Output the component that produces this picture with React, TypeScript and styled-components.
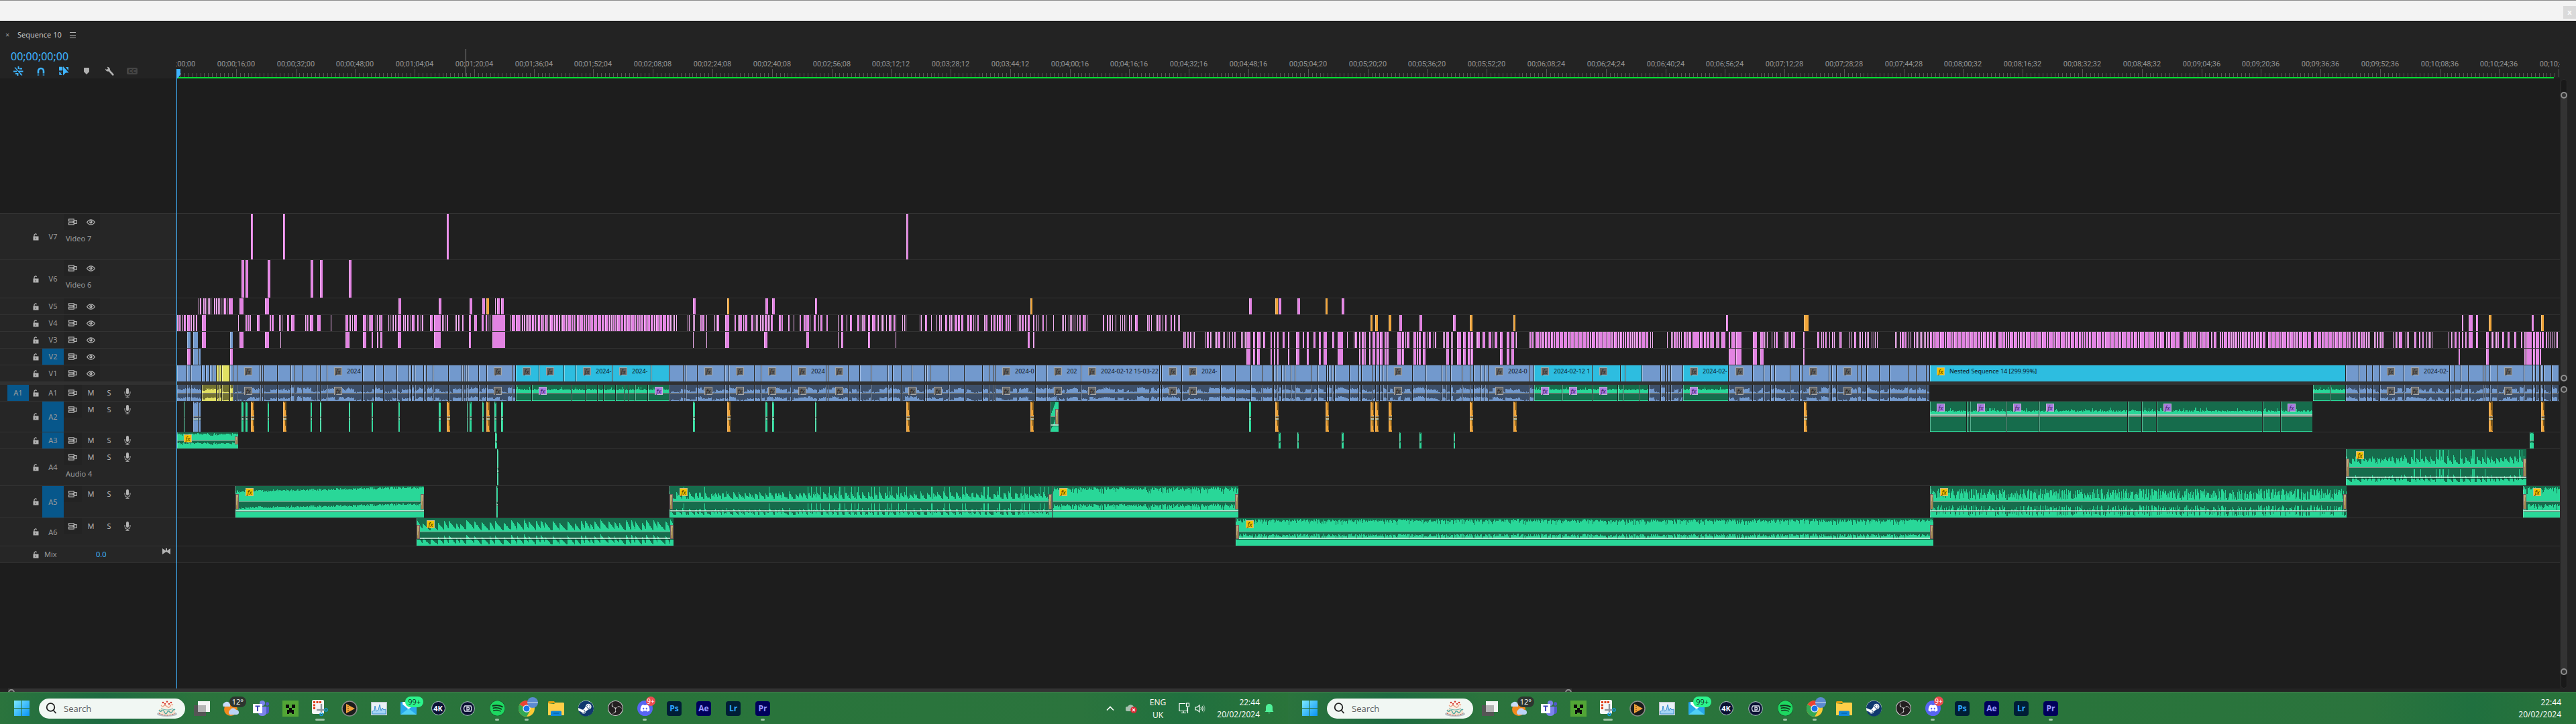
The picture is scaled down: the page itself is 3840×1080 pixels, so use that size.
import React from "react";
import styled, { createGlobalStyle, css } from "styled-components";
import { FaSpotify, FaSteam, FaDiscord } from "react-icons/fa";
import { SiObsstudio } from "react-icons/si";

const GlobalStyle = createGlobalStyle`
  * { box-sizing: border-box; }
  html, body { margin: 0; background: #1d1d1d; }
  body { font-family: "Noto Sans", "Open Sans", sans-serif; font-size: 11px; line-height: 16px; color: #9b9b9b; overflow: hidden; }
  button { font: inherit; color: inherit; background: none; border: 0; padding: 0; margin: 0; cursor: pointer; }
  input { font: inherit; color: inherit; background: none; border: 0; padding: 0; margin: 0; outline: none; }
  svg { display: block; }
`;

/* ---------- timeline data ---------- */

const HEADER_WIDTH = 263;

type Tone = "pink" | "orange" | "blue" | "cyan" | "yellow" | "green";
type Span = { from: number; width: number; tone: Tone };

const tones: Record<Tone, { fill: string; edge: string; dark: string }> = {
  pink: { fill: "#e283e2", edge: "#f1b0f0", dark: "#6d3f6d" },
  orange: { fill: "#efa439", edge: "#f6c888", dark: "#7b561c" },
  blue: { fill: "#7299cd", edge: "#a3bde0", dark: "#3d4f69" },
  cyan: { fill: "#2dbde0", edge: "#7fd8ec", dark: "#17606f" },
  yellow: { fill: "#e1e163", edge: "#eeeeaa", dark: "#727131" },
  green: { fill: "#29d798", edge: "#86e8c4", dark: "#166c4c" },
};

/** Deterministic random source, so that every render draws the same clips. */
function random(seed: number) {
  let s = (seed * 7919 + 13) % 2147483647;
  return () => {
    s = (s * 16807) % 2147483647;
    return s / 2147483647;
  };
}

/** "264,1 266,2" gives two clips, at 264 and 266, one and two pixels wide. */
function spans(tone: Tone, list: string): Span[] {
  return list
    .trim()
    .split(/\s+/)
    .map((item) => {
      const [from, width] = item.split(",").map(Number);
      return { from, width: width || 1, tone };
    });
}

/** A run of clips that are packed one pixel apart. */
function packed(from: number, to: number, min: number, max: number, tone: Tone = "pink"): Span[] {
  const next = random(from);
  const out: Span[] = [];
  let x = from;
  while (x < to) {
    const width = Math.min(min + Math.floor(next() * (max - min + 1)), to - x);
    out.push({ from: x, width, tone });
    x += width + 1;
  }
  return out;
}

const video7 = spans("pink", "374,3 422,3 666,3 1351,3");
const video6 = spans("pink", "360,4 366,4 399,4 463,4 477,4 520,4");
const video5 = [
  ...spans("pink", "296,1 298,2 303,2 306,1 308,1 310,1 312,1 314,1 319,2 322,2 325,1 327,1 329,1 332,1 334,3 338,1 341,6 357,6 395,6 594,4 654,4 700,4 719,4 738,1 741,4 747,4 1033,4 1141,4 1151,4 1215,3 1862,4 1906,4 1934,4 2000,4"),
  ...spans("orange", "725,4 1084,3 1536,3 1901,4 1976,3"),
];
const video4 = [
  ...spans("pink", "264,1 266,2 269,1 272,1 274,3 279,5 285,1 288,1 290,1 292,2 301,6 355,1 366,2 369,3 373,1 383,4 402,2 405,3 416,1 418,1 420,1 428,3 434,5 455,1 457,2 460,1 462,5 473,5 493,1 515,4 520,1 522,1 525,1 528,4 541,5 548,1 550,1 552,4 560,1 562,1 565,1 567,3 579,1 581,1 584,1 586,1 589,2 593,5 601,2 604,1 607,2 612,1 614,4 622,2 627,1 629,2 641,4 647,10 659,1 661,1 663,1 666,2 678,1 680,1 683,2 689,2 699,3 707,4 718,3 724,2 727,1 730,1 734,19 760,1 763,5 769,6"),
  ...packed(776, 998, 1, 5),
  ...spans("pink", "999,1 1001,1 1003,1 1005,1 1008,1 1025,1 1027,1 1033,1 1035,1 1044,2 1047,3 1053,1 1065,1 1067,1 1069,3 1081,6 1095,2 1100,1 1102,4 1108,1 1110,4 1120,3 1125,1 1127,1 1129,1 1133,2 1136,1 1138,1 1140,4 1145,1 1147,1 1149,3 1161,3 1165,2 1175,2 1183,1 1192,2 1198,3 1202,4 1207,1 1213,3 1220,1 1223,3 1232,2 1249,1 1254,3 1262,1 1267,3 1278,3 1283,1 1285,1 1287,3 1294,3 1300,5 1307,1 1309,1 1313,1 1315,1 1317,1 1321,1 1325,3 1329,1 1332,2 1335,1 1345,1 1348,1 1350,1 1371,1 1373,1 1379,3 1388,1 1396,1 1400,2 1403,1 1409,3 1415,2 1418,1 1420,1 1423,4 1428,3 1433,3 1442,3 1446,3 1451,1 1453,1 1457,2 1467,1 1469,3 1477,2 1481,2 1484,1 1486,2 1489,3 1493,2 1499,2 1502,2 1505,2 1517,1 1519,1 1521,1 1523,3 1528,2 1532,3 1540,2 1545,1 1547,1 1554,2 1559,1 1570,1 1583,1 1585,1 1588,1 1593,1 1595,1 1597,1 1599,1 1602,1 1606,1 1609,2 1614,3 1618,1 1620,1 1644,2 1650,2 1653,1 1655,1 1658,1 1663,1 1670,1 1673,1 1676,1 1678,1 1683,2 1686,1 1692,4 1710,1 1712,2 1716,1 1723,1 1725,1 1727,3 1733,1 1737,2 1745,2 1750,2 1756,1 1758,1 2086,4 2116,4 2166,4 2573,3 3670,2 3680,6 3691,3 3774,3"),
  ...spans("orange", "2043,3 2050,4 2070,4 2191,4 2256,3 2689,7 3710,4 3788,4"),
];
const video3 = [
  ...spans("blue", "279,5 288,7 343,4"),
  ...spans("pink", "301,6 357,6 395,6 418,1 515,5 520,1 541,5 554,2 562,2 567,3 593,5 647,10 699,3 734,19 1033,1 1053,1 1081,6 1139,5 1202,4 1249,1 1254,3 1294,3 1335,1 1532,3 1540,2 1764,2 1767,1 1770,2 1774,2 1778,1 1780,1 1796,1 1799,3 1804,1 1806,1 1811,1 1813,1 1815,4 1823,1 1825,1 1830,1 1832,1 1837,1 1840,2 1850,1 1852,1 1854,1 1856,1 1858,6 1868,3 1874,4 1879,1 1883,3 1894,2 1899,2 1904,2 1912,3 1920,2 1932,5 1942,2 1948,3 1958,3 1966,3 1973,5 1986,3 1994,8 2008,1 2018,1 2020,3 2026,2 2030,3 2034,2 2041,2 2046,4 2052,4 2057,4 2064,3 2068,2 2083,6 2090,3 2095,1 2097,4 2107,4 2112,2 2115,3 2121,4 2128,1 2130,3 2137,1 2139,2 2151,1 2153,1 2156,4 2163,1 2165,1 2172,6 2181,4 2188,4 2193,3 2200,1 2202,4 2210,4 2219,4 2225,1 2228,4 2236,4 2246,4 2253,4 2258,1 2260,1 2280,2 2283,2 2285,1"),
  ...packed(2289, 2457, 2, 5),
  ...spans("pink", "2460,1 2463,1 2485,1 2491,1 2493,1 2495,3 2499,3 2503,1 2506,1"),
  ...packed(2510, 2522, 2, 4),
  ...spans("pink", "2523,10 2534,4 2540,3 2544,4 2549,1 2551,4 2558,1 2560,3 2566,6 2577,2 2581,6 2588,8 2613,6 2624,5 2630,1 2632,1 2634,1 2641,1 2645,1 2647,3 2659,1 2661,1 2663,3 2670,1 2672,4 2688,2 2709,3 2715,1 2717,2 2721,2 2727,1 2731,2 2734,1 2742,2 2745,1 2757,1 2759,1 2764,3 2771,1 2773,1 2776,1 2780,2 2783,1 2785,1 2790,1 2793,1 2795,1 2798,1 2825,1 2827,1 2832,2 2835,3 2839,3 2845,1 2848,1 2853,2 2856,1 2858,1 2860,1 2862,1 2864,1 2866,1 2868,1 2870,1 2873,2"),
  ...packed(2877, 2976, 2, 6),
  ...packed(2979, 3226, 2, 7),
  ...packed(3229, 3250, 2, 7),
  ...packed(3255, 3276, 2, 6),
  ...packed(3279, 3293, 2, 6),
  ...spans("pink", "3296,2 3300,4"),
  ...packed(3309, 3378, 2, 5),
  ...packed(3381, 3445, 2, 6),
  ...packed(3449, 3504, 3, 5),
  ...packed(3507, 3534, 1, 3),
  ...packed(3539, 3555, 1, 2),
  ...spans("pink", "3567,1 3571,2 3574,1 3576,5 3586,1 3588,1 3590,1 3599,3 3606,2 3611,2 3617,1 3619,1 3621,1 3623,1 3625,1 3650,1 3654,1 3656,1 3659,3 3665,2 3670,2 3675,2 3680,6 3691,3 3706,4 3713,1 3715,2 3719,1 3721,1 3723,2 3730,3 3738,3 3748,3 3758,2 3763,2 3766,8 3776,3 3780,5 3786,2 3789,3 3795,2 3798,1 3801,1 3805,1 3808,1 3810,1 3812,1"),
];
const video2 = [
  ...spans("blue", "288,7 296,3"),
  ...spans("pink", "279,5 343,4 1858,6 1868,3 1874,4 1894,2 1899,2 1904,2 1920,2 1932,5 1948,3 1966,3 1973,5 1994,8 2026,2 2030,3 2034,2 2041,2 2046,4 2052,4 2057,4 2064,3 2068,2 2083,6 2090,3 2107,4 2112,2 2115,3 2121,4 2156,4 2163,1 2165,1 2172,6 2181,4 2188,4 2193,3 2236,4 2246,4 2253,4 2577,10 2588,8 2613,6 2624,5 2688,2 3665,2 3706,4 3763,2 3766,8 3776,3 3780,5 3786,2"),
];

/** Clips that touch: each number is a cut, the last one is the end of the run. */
function cuts(tone: Tone, list: string): Span[] {
  const at = list.trim().split(/\s+/).map(Number);
  return at.slice(0, -1).map((from, i) => ({ from, width: at[i + 1] - from - 1, tone }));
}

const blueCutsA = "348 354 388 390 393 414 434 439 451 473 478 488 541 559 572 592 610 614 619 632 636 646 669 689 691 695 698 714 726 764 769";
const blueCutsB = "998 1019 1023 1040 1081 1087 1125 1135 1180 1232 1235 1265 1282 1299 1324 1331 1344 1360 1379 1382 1387 1415 1438 1465 1475 1481 1484 1544 1561 1612 1729 1732 1762 1820 1842 1865 1882 1897 1899 1904 1911 1916 1925 1931 1955 1965 1978 1981 1986 1990 2012 2026 2030 2046 2051 2057 2062 2068 2106 2126 2150 2156 2163 2180 2192 2197 2208 2214 2219 2280 2287";
const blueSoundCutsB = blueCutsB.replace(" 1360", "").replace(" 1387", "");
const blueCutsC = "2577 2613 2630 2640 2646 2669 2683 2687 2727 2731 2738 2769 2775 2783 2802 2817 2845 2857 2872 2877";
const blueCutsD = "3497 3517 3528 3537 3548 3584 3652 3659 3669 3680 3702 3705 3712 3723 3763 3776 3780 3786 3788 3792 3804 3815";

const video1 = [
  ...cuts("blue", "264 279 285 301 307 313 318 323"),
  ...cuts("yellow", "323 327 331 343"),
  ...cuts("blue", "343 348"),
  ...cuts("blue", blueCutsA),
  ...cuts("cyan", "769 804 841 859 913 971 998"),
  ...cuts("blue", blueCutsB),
  ...cuts("cyan", "2287 2374 2416 2423 2448"),
  ...cuts("blue", "2448 2476 2483 2486 2491 2509"),
  ...cuts("cyan", "2509 2577"),
  ...cuts("blue", blueCutsC),
  ...cuts("cyan", "2877 3497"),
  ...cuts("blue", blueCutsD),
];

const videoTitles: Record<number, string> = {
  354: "", 488: "2024", 726: "", 769: "", 804: "", 859: "2024-", 913: "2024-",
  1040: "", 1087: "", 1135: "", 1180: "2024", 1235: "", 1484: "2024-0", 1561: "202",
  1612: "2024-02-12 15-03-22", 1732: "", 1762: "2024-", 2068: "", 2219: "2024-0",
  2287: "2024-02-12 1", 2374: "", 2509: "2024-02-", 2577: "", 2687: "", 2738: "",
  2877: "Nested Sequence 14 [299.99%]", 3548: "", 3584: "2024-02-", 3723: "",
};

type Profile = "speech" | "low" | "loud" | "rising" | "beats" | "spikes" | "dense" | "solid" | "decay" | "attack";
type Sound = Span & { profile: Profile; fx?: "grey" | "violet" | "gold"; fadeIn?: boolean; fadeOut?: boolean };

const sound = (list: Span[], profile: Profile, fx?: Record<number, boolean>, kind: Sound["fx"] = "grey"): Sound[] =>
  list.map((s) => ({ ...s, profile, fx: fx && fx[s.from] ? kind : undefined }));
const marks = (...at: number[]) => Object.fromEntries(at.map((n) => [n, true]));

const greyMarks = marks(354, 488, 726, 1040, 1087, 1135, 1180, 1235, 1344, 1382, 1484, 1561, 1612, 1732, 1762, 2068, 2219, 2577, 2687, 2738, 3548, 3584, 3723);

const audio1: Sound[] = [
  ...sound(cuts("blue", "264 279 285 301"), "speech"),
  ...sound(cuts("yellow", "301 323 327 331 343 348"), "speech"),
  ...sound(cuts("blue", blueCutsA), "speech", greyMarks),
  ...sound(cuts("green", "769 793 852 873 891 900 918 931 937 947 966 998"), "low", marks(793, 966), "violet"),
  ...sound(cuts("blue", blueSoundCutsB), "speech", greyMarks),
  ...sound(cuts("green", "2287 2329 2374 2412 2420 2444 2458"), "low", marks(2287, 2329, 2374), "violet"),
  ...sound(cuts("blue", "2458 2476 2483 2486 2491 2509"), "speech"),
  ...sound(cuts("green", "2509 2577"), "low", marks(2509), "violet"),
  ...sound(cuts("blue", blueCutsC), "speech", greyMarks),
  ...sound(cuts("green", "3448 3474 3497"), "low"),
  ...sound(cuts("blue", blueCutsD), "speech", greyMarks),
];
const audio2: Sound[] = [
  ...sound(spans("green", "274,1 360,3 366,3 399,2 463,2 477,2 520,2 554,2 594,2 654,3 696,1 700,3 719,2 737,3 747,3 1033,3 1141,3 1151,3 1215,2 1862,3"), "solid"),
  ...sound(spans("blue", "288,7 296,3"), "solid"),
  ...sound(spans("orange", "374,5 422,5 666,5 725,5 1084,5 1351,5 1536,5 1901,5 1976,5 2043,5 2050,5 2070,5 2191,5 2256,5 2689,5 3710,6 3788,5"), "decay"),
  { from: 1566, width: 12, tone: "green", profile: "attack", fadeOut: true },
  ...sound(cuts("green", "2877 2932 2937 2991 3040 3172 3193 3215 3373 3400 3448"), "low", marks(2877, 2937, 2991, 3040, 3215, 3400), "violet"),
];
const audio3: Sound[] = [
  { from: 264, width: 91, tone: "green", profile: "loud", fx: "gold", fadeOut: true },
  ...sound(spans("green", "738,3 1906,3 1934,2 2000,3 2086,2 2116,3 2167,2 3771,6"), "solid"),
];
const audio4: Sound[] = [
  ...sound(spans("green", "741,2"), "solid"),
  { from: 3497, width: 269, tone: "green", profile: "spikes", fx: "gold", fadeIn: true, fadeOut: true },
];
const audio5: Sound[] = [
  { from: 351, width: 281, tone: "green", profile: "rising", fx: "gold", fadeIn: true, fadeOut: true },
  ...sound(spans("green", "740,2"), "solid"),
  { from: 998, width: 570, tone: "green", profile: "spikes", fx: "gold", fadeIn: true, fadeOut: true },
  { from: 1569, width: 277, tone: "green", profile: "loud", fx: "gold", fadeOut: true },
  { from: 2877, width: 621, tone: "green", profile: "dense", fx: "gold", fadeIn: true, fadeOut: true },
  { from: 3761, width: 56, tone: "green", profile: "loud", fx: "gold", fadeIn: true },
];
const audio6: Sound[] = [
  { from: 621, width: 383, tone: "green", profile: "beats", fx: "gold", fadeIn: true, fadeOut: true },
  { from: 1842, width: 1040, tone: "green", profile: "loud", fx: "gold", fadeIn: true, fadeOut: true },
];

/* ---------- wave forms ---------- */

function levels(profile: Profile, width: number, seed: number): number[] {
  const next = random(seed);
  const out: number[] = [];
  let level = 0.5;
  let hold = 0;
  let slope = 0;
  for (let x = 0; x < width; x++) {
    const r = next();
    const t = x / width;
    if (profile === "solid") out.push(0.9 + r * 0.1);
    else if (profile === "decay") out.push([1, 1, 0.95, 0.45, 0.1, 0.05][x] ?? 0.05);
    else if (profile === "attack") out.push(Math.min(1, 0.1 + x * 0.13));
    else if (profile === "speech") {
      if (hold-- <= 0) {
        hold = 2 + Math.floor(r * 7);
        level = next() < 0.3 ? 0.12 : 0.35 + next() * 0.35;
      }
      out.push(Math.min(0.95, level + (r - 0.5) * 0.22));
    } else if (profile === "low") out.push(0.28 + r * 0.2 + (next() < 0.07 ? 0.3 : 0));
    else if (profile === "loud") out.push(next() < 0.14 ? 0.5 + r * 0.25 : 0.76 + r * 0.22);
    else if (profile === "rising") out.push(Math.min(1, 0.6 + t * 0.28 + r * 0.16));
    else if (profile === "beats") {
      if (hold-- <= 0) {
        hold = 5 + Math.floor(r * 8);
        level = 0.6 + next() * 0.35;
        slope = level / (hold + 2);
      }
      out.push(Math.max(0.1, level));
      level -= slope * (0.6 + r * 0.8);
    } else if (profile === "spikes") {
      if (hold-- <= 0) {
        hold = 4 + Math.floor(r * 6);
        level = 0.65;
      }
      level -= 0.06;
      out.push(next() < (t > 0.35 ? 0.1 : 0.02) ? 1 : Math.max(0.2, level + (r - 0.5) * 0.2));
    } else out.push(next() < 0.3 ? 0.1 + r * 0.2 : 0.4 + r * 0.48);
  }
  return out;
}

function channel(values: number[], base: number, height: number): string {
  let d = `M0 ${base}`;
  values.forEach((v, i) => {
    d += `V${base - Math.round(v * height)}H${i + 1}`;
  });
  return `${d}V${base}Z`;
}

function Wave({ item, height }: { item: Sound; height: number }) {
  const mid = Math.floor(height / 2);
  const values = levels(item.profile, item.width, item.from);
  const tone = tones[item.tone];
  const tall = height > 40;
  const single = item.profile === "low";
  const volume = single ? mid - 3 : Math.round(height * (height < 45 ? 0.7 : 0.76)) - (item.profile === "solid" || item.profile === "decay" ? 9 : 0);
  const base = single && tall ? volume : mid;
  return (
    <svg width={item.width} height={height} shapeRendering="crispEdges" aria-hidden="true">
      <path d={channel(values, base, single ? 13 : base - 1)} fill={tone.fill} />
      {single ? (
        <rect y={height - 1} width={item.width} height="1" fill={tone.fill} />
      ) : (
        <path d={channel(values, height, height - mid - 3)} fill={tone.fill} />
      )}
      {single && tall && <rect y={mid - 1} width={item.width} height="1" fill={tone.fill} />}
      <rect y={mid} width={item.width} height="1" fill="#88877f" />
      {tall && <rect y={volume} width={item.width} height="2" fill="#d8efe2" opacity="0.75" />}
      {tall && <rect y={volume + 2} width={item.width} height="1" fill="#123c2c" opacity="0.8" />}
    </svg>
  );
}

/* ---------- clips ---------- */

const Lane = styled.div`
  position: relative;
  min-width: 0;
  overflow: hidden;
  background: #202020;
`;

const ClipBox = styled.div<{ $tone: Tone; $sound?: boolean }>`
  position: absolute;
  top: 0;
  bottom: 0;
  overflow: hidden;
  background: ${(p) => (p.$sound ? tones[p.$tone].dark : tones[p.$tone].fill)};
  &::before {
    content: "";
    position: absolute;
    inset: 0 auto 0 0;
    width: 1px;
    background: ${(p) => tones[p.$tone].edge};
    opacity: ${(p) => (p.$sound ? 0.6 : 1)};
  }
`;

const ClipInfo = styled.div<{ $inset?: boolean }>`
  position: absolute;
  top: 3px;
  left: ${(p) => (p.$inset ? 15 : 10)}px;
  display: flex;
  align-items: center;
  gap: 7px;
  height: 12px;
`;

const fxColors = {
  grey: css`background: #646464; border-color: #a6a6a6; color: #262626;`,
  violet: css`background: #a97be0; border-color: #c3b4d4; color: #3a2360;`,
  gold: css`background: #f4c300; border-color: #c9bb8a; color: #4d3d00;`,
};

const FxBadge = styled.span<{ $kind: keyof typeof fxColors }>`
  display: flex;
  align-items: center;
  justify-content: center;
  width: 12px;
  height: 12px;
  border: 1px solid;
  font-size: 9px;
  line-height: 9px;
  font-style: italic;
  ${(p) => fxColors[p.$kind]}
`;

const ClipTitle = styled.span`
  font-size: 9px;
  line-height: 12px;
  color: #0b131c;
  white-space: nowrap;
`;

const Fade = styled.span<{ $end?: boolean }>`
  position: absolute;
  top: 25%;
  height: 50%;
  width: 5px;
  ${(p) => (p.$end ? "right: 0;" : "left: 0;")}
  background: linear-gradient(100deg, #c0aa78 45%, #a2894f 50%);
  border: 1px solid #6f5d62;
`;

function VideoClips({ items, titles = {} }: { items: Span[]; titles?: Record<number, string> }) {
  return (
    <>
      {items.map((s) => (
        <ClipBox key={`${s.tone}${s.from}`} $tone={s.tone} style={{ left: s.from - HEADER_WIDTH, width: s.width }}>
          {titles[s.from] !== undefined && (
            <ClipInfo>
              <FxBadge $kind={s.width > 300 ? "gold" : "grey"}>fx</FxBadge>
              {titles[s.from] && <ClipTitle>{titles[s.from]}</ClipTitle>}
            </ClipInfo>
          )}
        </ClipBox>
      ))}
    </>
  );
}

function SoundClips({ items, height }: { items: Sound[]; height: number }) {
  return (
    <>
      {items.map((s) => (
        <ClipBox key={`${s.tone}${s.from}`} $tone={s.tone} $sound style={{ left: s.from - HEADER_WIDTH, width: s.width }}>
          <Wave item={s} height={height} />
          {s.fadeIn && <Fade />}
          {s.fadeOut && <Fade $end />}
          {s.fx && (
            <ClipInfo $inset={s.fadeIn}>
              <FxBadge $kind={s.fx}>fx</FxBadge>
            </ClipInfo>
          )}
        </ClipBox>
      ))}
    </>
  );
}

/* ---------- icons ---------- */

const LockIcon = () => (
  <svg width="9" height="11" viewBox="0 0 9 11" aria-hidden="true">
    <path d="M2 5V3a2 2 0 0 1 3.6-1.2" fill="none" stroke="#b4b4b4" strokeWidth="1.2" />
    <rect x="0.5" y="4.5" width="8" height="6" fill="#b4b4b4" />
    <rect x="4" y="6.5" width="1" height="2.5" fill="#2a2a2a" />
  </svg>
);
const SyncIcon = () => (
  <svg width="13" height="10" viewBox="0 0 13 10" fill="none" stroke="#b4b4b4" strokeWidth="1.2" aria-hidden="true">
    <path d="M0.6 0.8h7.6v3H0.6zM0.6 6.2h7.6v3H0.6zM8.5 2.6h3.6v4.8H8.5M6.5 5h3" />
  </svg>
);
const EyeIcon = () => (
  <svg width="13" height="9" viewBox="0 0 13 9" aria-hidden="true">
    <path d="M0.6 4.5Q3.2 0.8 6.5 0.8T12.4 4.5Q9.8 8.2 6.5 8.2T0.6 4.5Z" fill="none" stroke="#b4b4b4" strokeWidth="1.2" />
    <circle cx="6.5" cy="4.3" r="2.2" fill="#b4b4b4" />
    <circle cx="6" cy="3.8" r="0.8" fill="#2a2a2a" />
  </svg>
);
const MicIcon = () => (
  <svg width="10" height="14" viewBox="0 0 10 14" aria-hidden="true">
    <rect x="3" y="0" width="4" height="9" rx="2" fill="#b4b4b4" />
    <path d="M1 5v2.5a4 4 0 0 0 8 0V5M5 11.5V13M2.5 13.3h5" fill="none" stroke="#b4b4b4" strokeWidth="1" />
  </svg>
);
const NestIcon = () => (
  <svg width="15" height="15" viewBox="0 0 15 15" stroke="#3fb4ff" aria-hidden="true">
    <path d="M2 1.5l11 12" strokeWidth="1.2" />
    <path d="M7.5 0v4M9 3.5h4M0 7.5h5M3 11h4M8 7.5h6.5M6.5 10v4M10 11.5h2" strokeWidth="1.8" />
  </svg>
);
const MagnetIcon = () => (
  <svg width="12" height="13" viewBox="0 0 12 13" fill="none" aria-hidden="true">
    <path d="M2 9V6a4 4 0 0 1 8 0v3" stroke="#3fb4ff" strokeWidth="2.6" />
    <path d="M2 9v4M10 9v4" stroke="#2a6a91" strokeWidth="2.6" />
  </svg>
);
const LinkIcon = () => (
  <svg width="15" height="14" viewBox="0 0 15 14" aria-hidden="true">
    <path d="M0 1h5v5H0zM0.6 8.5h4M0.6 8v4.5h4" fill="#3fb4ff" stroke="#3fb4ff" strokeWidth="0.6" />
    <path d="M6 0l8.5 9.5H10L6 13.5z M10 1h4v5.5z" fill="#3fb4ff" />
  </svg>
);
const MarkerIcon = () => (
  <svg width="8" height="10" viewBox="0 0 8 10" aria-hidden="true">
    <path d="M0 1q0-1 1-1h6q1 0 1 1v5L4 10 0 6z" fill="#b0b0b0" />
  </svg>
);
const WrenchIcon = () => (
  <svg width="14" height="14" viewBox="0 0 14 14" aria-hidden="true">
    <path d="M1 3.4L3.2 5 5 3.4 3.6.8A4.2 4.2 0 0 1 8 5.4l5.4 6.2q.6 1-.3 1.9-.9.7-1.8-.2L6 7.4A4 4 0 0 1 1 3.4z" fill="#b0b0b0" />
  </svg>
);
const BowtieIcon = () => (
  <svg width="12" height="9" viewBox="0 0 12 9" aria-hidden="true">
    <path d="M0 0l5 3.6V0h2v3.6L12 0v9L7 5.4H5L0 9z" fill="#b4b4b4" />
  </svg>
);

/* ---------- page shell ---------- */

const Page = styled.div`
  display: flex;
  flex-direction: column;
  height: 100vh;
  background: #1d1d1d;
`;

const WindowStrip = styled.div`
  flex: none;
  display: flex;
  justify-content: flex-end;
  align-items: center;
  height: 32px;
  padding-top: 4px;
  background: #f3f3f3;
  border-top: 1px solid #8a8a8a;
  border-bottom: 1px solid #101010;
`;
const StripClose = styled.button`
  width: 19px;
  height: 19px;
  background: #dadada;
  color: #fafafa;
  font-weight: 700;
`;

const PanelHeader = styled.header`
  flex: none;
  display: grid;
  grid-template-columns: ${HEADER_WIDTH}px 1fr 24px;
  height: 85px;
  background: #232323;
`;
const HeaderTools = styled.div`
  display: flex;
  flex-direction: column;
  padding: 12px 0 0 8px;
  gap: 15px;
`;
const TabRow = styled.div`
  display: flex;
  align-items: center;
  gap: 12px;
  height: 16px;
  color: #c2c2c2;
`;
const TabClose = styled.button`
  font-size: 11px;
  width: 6px;
  color: #9b9b9b;
`;
const TabMenu = styled.button`
  display: flex;
  flex-direction: column;
  gap: 3px;
  width: 9px;
  span { height: 1px; background: #b4b4b4; }
`;
const Timecode = styled.input`
  width: 120px;
  height: 18px;
  padding-left: 8px;
  font-size: 16px;
  line-height: 18px;
  color: #3fb4ff;
`;
const ToolRow = styled.div`
  display: flex;
  gap: 8px;
  height: 16px;
  margin-top: -10px;
  padding-left: 6px;
`;
const Tool = styled.button`
  display: flex;
  align-items: center;
  justify-content: center;
  width: 26px;
  height: 16px;
`;
const CaptionMark = styled.span`
  width: 16px;
  height: 10px;
  border-radius: 2px;
  background: #454545;
  color: #222;
  font-size: 9px;
  line-height: 10px;
  font-weight: 700;
`;

/* ---------- ruler ---------- */

const RulerBox = styled.div`
  position: relative;
  overflow: hidden;
`;
const RulerLabel = styled.span`
  position: absolute;
  top: 56px;
  width: 80px;
  text-align: center;
  font-family: Roboto, "Noto Sans", sans-serif;
  color: #949494;
`;
const RulerMarks = styled.svg`
  position: absolute;
  left: 0;
  bottom: 2px;
`;
const RenderBar = styled.div`
  position: absolute;
  left: 1px;
  right: 9px;
  bottom: 0;
  height: 2px;
  background: #05e033;
`;
const PointerLine = styled.div`
  position: absolute;
  left: 431px;
  top: 41px;
  bottom: 3px;
  width: 1px;
  background: #858585;
`;
const PlayheadGrip = styled.svg`
  position: absolute;
  left: 0;
  bottom: 0;
`;

const STEP_SECONDS = 16;
const STEP_WIDTH = 88.78;
const pad = (n: number) => String(n).padStart(2, "0");

/** Drop-frame time code at 59.94 frames per second. */
function timecode(step: number): string {
  const seconds = step * STEP_SECONDS;
  const minutes = Math.floor(seconds / 60);
  const frames = 4 * (minutes - Math.floor(minutes / 10));
  return `00;${pad(minutes)};${pad(seconds % 60)};${pad(frames)}`;
}

function Ruler() {
  const steps = Array.from({ length: 41 }, (_, i) => i);
  let d = "";
  steps.forEach((s) => {
    for (let k = 0; k < 15; k++) {
      const x = Math.round((s + k / 15) * STEP_WIDTH);
      d += `M${x} ${k ? 6 : 0}h1V12h-1z`;
    }
  });
  return (
    <RulerBox>
      {steps.map((s) => (
        <RulerLabel key={s} style={{ left: Math.round(s * STEP_WIDTH) - 40 }}>{timecode(s)}</RulerLabel>
      ))}
      <RulerMarks width="3553" height="12" shapeRendering="crispEdges" aria-hidden="true">
        <path d={d} fill="#565656" />
      </RulerMarks>
      <PointerLine />
      <RenderBar />
      <PlayheadGrip width="6" height="14" viewBox="0 0 6 14" aria-hidden="true">
        <path d="M0 0h6v8l-4 6H0z" fill="#3fb4ff" />
      </PlayheadGrip>
    </RulerBox>
  );
}

/* ---------- track area ---------- */

const Body = styled.main`
  flex: 1;
  display: grid;
  grid-template-columns: 1fr 24px;
  min-height: 0;
`;
const Tracks = styled.section`
  position: relative;
  display: flex;
  flex-direction: column;
  min-width: 0;
`;
const Space = styled.div<{ $grow: number }>`
  flex: ${(p) => p.$grow} 0 0;
`;
const Playhead = styled.div`
  position: absolute;
  top: 0;
  bottom: 0;
  left: ${HEADER_WIDTH}px;
  width: 1px;
  background: #3fb4ff;
`;
const TrackList = styled.div`
  flex: none;
  border-top: 1px solid #333;
`;
const TrackRow = styled.div<{ $height: number; $bare?: boolean }>`
  display: grid;
  grid-template-columns: ${HEADER_WIDTH}px 1fr;
  height: ${(p) => p.$height}px;
  border-bottom: ${(p) => (p.$bare ? 0 : 1)}px solid #333;
`;
const Divider = styled.div`
  height: 5px;
  background: #313131;
`;
const TrackHead = styled.div`
  display: grid;
  grid-template-columns: 11px 32px 20px 32px 1fr;
  align-items: stretch;
  background: #262626;
  border-right: 1px solid #303030;
`;
const Patch = styled.button<{ $on?: boolean }>`
  background: ${(p) => (p.$on ? "#07578b" : "transparent")};
  color: #9b9b9b;
`;
const LockButton = styled.button`
  display: flex;
  align-items: center;
  justify-content: center;
`;
const Controls = styled.div`
  display: flex;
  flex-direction: column;
  gap: 5px;
`;
const ControlRow = styled.div<{ $count: number }>`
  display: flex;
  width: ${(p) => p.$count * 27}px;
  height: 24px;
  background: #232323;
`;
const Control = styled.button`
  flex: none;
  display: flex;
  align-items: center;
  justify-content: center;
  width: 27px;
  height: 24px;
  color: #b4b4b4;
`;
const TrackName = styled.span`
  padding-left: 3px;
`;
const MixHead = styled.div`
  display: grid;
  grid-template-columns: 43px 20px 80px 95px 20px;
  align-items: center;
  background: #262626;
  border-right: 1px solid #303030;
`;
const KeyButton = styled(LockButton)`
  align-self: start;
  padding-top: 3px;
`;
const MixName = styled.span`
  padding-left: 3px;
`;
const MixLevel = styled.input`
  width: 40px;
  color: #3fb4ff;
`;

type TrackInfo = {
  id: string;
  height: number;
  name?: string;
  patched?: boolean;
  target?: boolean;
  bare?: boolean;
  clips?: Span[];
  titles?: Record<number, string>;
  sounds?: Sound[];
};

const videoTracks: TrackInfo[] = [
  { id: "V7", height: 69, name: "Video 7", clips: video7 },
  { id: "V6", height: 57, name: "Video 6", clips: video6 },
  { id: "V5", height: 25, clips: video5 },
  { id: "V4", height: 25, clips: video4 },
  { id: "V3", height: 25, clips: video3 },
  { id: "V2", height: 25, target: true, clips: video2 },
  { id: "V1", height: 24, bare: true, clips: video1, titles: videoTitles },
];
const audioTracks: TrackInfo[] = [
  { id: "A1", height: 25, patched: true, sounds: audio1 },
  { id: "A2", height: 46, target: true, sounds: audio2 },
  { id: "A3", height: 25, target: true, sounds: audio3 },
  { id: "A4", height: 55, name: "Audio 4", sounds: audio4 },
  { id: "A5", height: 48, target: true, sounds: audio5 },
  { id: "A6", height: 42, sounds: audio6 },
];

function Track({ track }: { track: TrackInfo }) {
  const audio = !!track.sounds;
  return (
    <TrackRow $height={track.height} $bare={track.bare}>
      <TrackHead>
        <span />
        {track.patched ? <Patch $on aria-label={`Source patch ${track.id}`}>{track.id}</Patch> : <span />}
        <LockButton aria-label={`Lock ${track.id}`}><LockIcon /></LockButton>
        <Patch $on={track.target} aria-label={`Target ${track.id}`}>{track.id}</Patch>
        <Controls>
          <ControlRow $count={audio ? 1 : 2}>
            <Control aria-label="Sync lock"><SyncIcon /></Control>
            {!audio && <Control aria-label="Track output"><EyeIcon /></Control>}
            {audio && <Control aria-label="Mute">M</Control>}
            {audio && <Control aria-label="Solo">S</Control>}
            {audio && <Control aria-label="Voice-over record"><MicIcon /></Control>}
          </ControlRow>
          {track.name && <TrackName>{track.name}</TrackName>}
        </Controls>
      </TrackHead>
      <Lane>
        {track.clips && <VideoClips items={track.clips} titles={track.titles} />}
        {track.sounds && <SoundClips items={track.sounds} height={track.height - 1} />}
      </Lane>
    </TrackRow>
  );
}

/* ---------- scroll bars ---------- */

const Rail = styled.div`
  display: flex;
  flex-direction: column;
  gap: 5px;
  padding: 1px 13px 0 1px;
  background: #232323;
`;
const RailTrack = styled.div<{ $end?: boolean }>`
  flex: 1 1 0;
  display: flex;
  padding: ${(p) => (p.$end ? "1px 0 20px" : "19px 0 1px")};
  border-radius: 5px;
  background: #191919;
  box-shadow: inset 0 0 0 1px #2c2c2c;
`;
const Thumb = styled.div`
  flex: 1;
  display: flex;
  flex-direction: column;
  justify-content: space-between;
  border-radius: 5px;
  background: #333;
`;
const Ring = styled.span`
  width: 10px;
  height: 10px;
  border: 2px solid #8e8e8e;
  border-radius: 50%;
`;
const BottomScroll = styled.div`
  flex: none;
  display: flex;
  height: 5px;
  overflow: hidden;
  background: #232323;
`;
const BottomThumb = styled.div`
  display: flex;
  justify-content: space-between;
  width: 60.7%;
  margin-left: 12px;
  height: 10px;
  padding: 1px 0 0;
  background: #333;
`;

/* ---------- task bar ---------- */

const Taskbar = styled.footer`
  flex: none;
  display: grid;
  grid-template-columns: 1fr 1fr;
  height: 48px;
  border-top: 1px solid #417f4c;
  font-family: "Open Sans", "Noto Sans", sans-serif;
  color: #fff;
`;
const Screen = styled.div`
  display: flex;
  align-items: center;
  min-width: 0;
  background: linear-gradient(90deg, #2b743d 0%, #1d6b41 8%, #2b743d 15%, #28743a 48%, #2b743d 84%, #20703f 92%, #2a743a 100%);
`;
const Start = styled.button`
  display: flex;
  justify-content: center;
  width: 48px;
  margin-left: 8px;
`;
const SearchBox = styled.label`
  display: flex;
  align-items: center;
  gap: 10px;
  width: 218px;
  height: 30px;
  margin: 0 3px 0 2px;
  padding: 0 12px 0 10px;
  border-radius: 15px;
  background: #f1f7f3;
`;
const SearchInput = styled.input`
  flex: 1;
  min-width: 0;
  font-size: 13px;
  line-height: 18px;
  color: #5d5d5d;
  &::placeholder { color: #5d5d5d; opacity: 1; }
`;
const AppButton = styled.button`
  position: relative;
  display: flex;
  align-items: center;
  justify-content: center;
  width: 44px;
  height: 47px;
`;
const Running = styled.span<{ $wide?: boolean }>`
  position: absolute;
  bottom: 5px;
  left: 50%;
  width: ${(p) => (p.$wide ? 14 : 6)}px;
  height: 3px;
  margin-left: ${(p) => (p.$wide ? -7 : -3)}px;
  border-radius: 2px;
  background: #9fc4a8;
`;
const Badge = styled.span<{ $color: string; $ink: string }>`
  position: absolute;
  top: 6px;
  right: 0;
  min-width: 14px;
  height: 16px;
  padding: 0 4px;
  border-radius: 8px;
  background: ${(p) => p.$color};
  color: ${(p) => p.$ink};
  font-size: 11px;
  line-height: 16px;
`;
const RedBadge = styled(Badge)`
  right: 6px;
  padding: 0 1px;
  height: 14px;
  line-height: 14px;
  font-size: 10px;
`;
const AdobeTile = styled.span<{ $bg: string; $ink: string }>`
  width: 22px;
  height: 22px;
  border-radius: 4px;
  background: ${(p) => p.$bg};
  color: ${(p) => p.$ink};
  font-size: 12px;
  line-height: 21px;
  font-weight: 700;
`;
const Disc = styled.span<{ $bg: string }>`
  display: flex;
  align-items: center;
  justify-content: center;
  width: 23px;
  height: 23px;
  border-radius: 50%;
  background: ${(p) => p.$bg};
`;
const FourK = styled.span`
  width: 21px;
  height: 21px;
  border: 1px solid #b9c4cf;
  border-radius: 50%;
  background: #0b1133;
  color: #fff;
  font-size: 11px;
  line-height: 19px;
  font-weight: 700;
`;
const Tray = styled.div<{ $inset: number }>`
  display: flex;
  align-items: center;
  margin-left: auto;
  padding-right: ${(p) => p.$inset}px;
`;
const TrayButton = styled.button<{ $width: number }>`
  display: flex;
  align-items: center;
  justify-content: center;
  width: ${(p) => p.$width}px;
  height: 40px;
`;
const Language = styled.button`
  width: 42px;
  margin-right: 8px;
  font-size: 12px;
  line-height: 19px;
`;
const Clock = styled.button`
  width: 75px;
  padding-top: 1px;
  text-align: right;
  font-size: 12px;
  line-height: 18px;
  white-space: nowrap;
`;

const WindowsLogo = () => (
  <svg width="23" height="23" viewBox="0 0 23 23" aria-hidden="true">
    <defs>
      <linearGradient id="win" x1="0" y1="0" x2="1" y2="1">
        <stop offset="0" stopColor="#7de9ff" />
        <stop offset="1" stopColor="#0a93f5" />
      </linearGradient>
    </defs>
    <path d="M0 0h11v11H0zM12 0h11v11H12zM0 12h11v11H0zM12 12h11v11H12z" fill="url(#win)" />
  </svg>
);
const SearchIcon = () => (
  <svg width="17" height="17" viewBox="0 0 17 17" fill="none" stroke="#222" strokeWidth="1.8" aria-hidden="true">
    <circle cx="7.5" cy="7" r="5.8" />
    <path d="M11.5 11.5L15.5 16" />
  </svg>
);
const CakeIcon = () => (
  <svg width="30" height="24" viewBox="0 0 30 24" aria-hidden="true">
    <ellipse cx="15" cy="20" rx="15" ry="4" fill="#b9c0c4" />
    <path d="M3 13h24v6q-12 6-24 0z" fill="#f3e3cf" />
    <path d="M3 14q2 4 4 1t4 2 4 1 4-1 4-1 4-2" fill="none" stroke="#4fa8a0" strokeWidth="1.4" />
    <path d="M3 19q12 6 24 0" fill="none" stroke="#d2473a" strokeWidth="1" strokeDasharray="2 2" />
    <path d="M6 4h18v9q-9 4-18 0z" fill="#f8efe4" />
    <path d="M6 7q2 3 4 1t5 1 5-1 4-1" fill="none" stroke="#e89a80" strokeWidth="1.2" />
    <path d="M6 12q9 4 18 0" fill="none" stroke="#6fb5ad" strokeWidth="1.2" />
    <ellipse cx="15" cy="4" rx="9" ry="2.5" fill="#fff6ec" />
    <g fill="#d1342c"><circle cx="9" cy="3" r="1.3" /><circle cx="15" cy="1.8" r="1.3" /><circle cx="21" cy="3" r="1.3" /><circle cx="12" cy="5" r="1.2" /><circle cx="18" cy="5" r="1.2" /></g>
  </svg>
);
const TaskViewIcon = () => (
  <svg width="24" height="22" viewBox="0 0 24 22" aria-hidden="true">
    <rect x="6" y="0" width="18" height="16" fill="#f4f4f4" />
    <rect x="0" y="6" width="18" height="16" fill="#555" />
    <rect x="6" y="6" width="12" height="10" fill="#b4b4b4" />
  </svg>
);
const WeatherIcon = () => (
  <svg width="26" height="24" viewBox="0 0 26 24" aria-hidden="true">
    <circle cx="12" cy="13" r="10" fill="#f28a1c" />
    <path d="M1 9a4 4 0 0 1 2-6 5 5 0 0 1 8 2v4z" fill="#c9dcf7" />
    <path d="M11 21a4 4 0 0 1 0-7 5 5 0 0 1 9 0 3.5 3.5 0 0 1 1 7z" fill="#bcd3f5" />
  </svg>
);
const TeamsIcon = () => (
  <svg width="25" height="24" viewBox="0 0 25 24" aria-hidden="true">
    <circle cx="14" cy="4" r="4" fill="#7b83eb" /><circle cx="21.5" cy="5" r="2.7" fill="#5059c9" />
    <path d="M17 9h7v7q0 4-4 4h-3z" fill="#5059c9" />
    <path d="M8 9h12v9q0 5-6 5t-6-5z" fill="#7b83eb" />
    <rect x="0" y="5" width="14" height="14" rx="1" fill="#fff" />
    <path d="M3.5 8.5h7M7 8.5V16" stroke="#3d46b8" strokeWidth="2" />
  </svg>
);
const BlockFaceIcon = () => (
  <svg width="24" height="24" viewBox="0 0 24 24" shapeRendering="crispEdges" aria-hidden="true">
    <rect width="24" height="24" fill="#52a535" />
    <path d="M5 6h5v5H5zM14 6h5v5h-5zM10 11h4v3h3v6h-3v-2h-4v2H7v-6h3z" fill="#0a0a0a" />
  </svg>
);
const SnipIcon = () => (
  <svg width="24" height="25" viewBox="0 0 24 25" aria-hidden="true">
    <rect width="18" height="21" rx="2" fill="#f6f6f6" />
    <path d="M3.5 14V3.5H14" fill="none" stroke="#e0401b" strokeWidth="3" strokeDasharray="3 1.5" />
    <path d="M14 6v12M7 15h13" stroke="#8f989e" strokeWidth="2.4" />
    <g fill="none" stroke="#1398dc" strokeWidth="1.6"><circle cx="14" cy="21.5" r="2" /><circle cx="21" cy="15" r="2" /></g>
  </svg>
);
const PlayerIcon = () => (
  <svg width="24" height="24" viewBox="0 0 24 24" aria-hidden="true">
    <circle cx="12" cy="12" r="11" fill="#1c1c1c" stroke="#8c8c8c" strokeWidth="1.5" />
    <path d="M7 5l13 7-13 7z" fill="#f0a23a" />
    <path d="M10 5v14" stroke="#5a3a10" strokeWidth="1.2" strokeDasharray="1.5 1.5" />
  </svg>
);
const MonitorIcon = () => (
  <svg width="24" height="20" viewBox="0 0 24 20" aria-hidden="true">
    <rect x="0.5" y="0.5" width="23" height="19" fill="#e9f1f7" stroke="#b9c0c5" />
    <path d="M2 14l3-1 1-7 2 8 3-2 2-8 2 9 2-4 2 3 3-1v7H2z" fill="#a6d5f5" stroke="#3a8fd0" strokeWidth="1" />
  </svg>
);
const MailIcon = () => (
  <svg width="24" height="19" viewBox="0 0 24 19" aria-hidden="true">
    <rect width="24" height="19" rx="1" fill="#1a8fe3" />
    <path d="M3 0h18v8l-9 6-9-6z" fill="#fff" />
    <path d="M0 1l12 10L0 19zM24 1L12 11l12 8z" fill="#28a8ea" /><path d="M0 19l12-9 12 9z" fill="#50d0f5" />
  </svg>
);
const CaptureIcon = () => (
  <svg width="22" height="22" viewBox="0 0 22 22" aria-hidden="true">
    <circle cx="11" cy="11" r="10.3" fill="#0b1133" stroke="#b9c4cf" />
    <path d="M7 7h9q2 4 0 8H7q-3-4 0-8z" fill="none" stroke="#d5dae6" strokeWidth="1.4" />
    <path d="M10 9h1.5a2 2 0 0 1 0 4H10z" fill="none" stroke="#d5dae6" strokeWidth="1.4" />
  </svg>
);
const ChromeIcon = () => (
  <svg width="24" height="24" viewBox="0 0 24 24" aria-hidden="true">
    <circle cx="12" cy="12" r="12" fill="#fcc934" />
    <path d="M12 12L1.6 6A12 12 0 0 1 22.4 6z" fill="#ea4335" />
    <path d="M12 12L1.6 6A12 12 0 0 0 12 24l5.2-9z" fill="#34a853" />
    <circle cx="12" cy="12" r="5.6" fill="#fff" /><circle cx="12" cy="12" r="4.5" fill="#1a73e8" />
  </svg>
);
const Avatar = styled.span`
  position: absolute;
  top: 7px;
  right: 5px;
  width: 16px;
  height: 16px;
  border-radius: 50%;
  background: linear-gradient(#5b8ad0 42%, #9bb9e0 44%, #9bb9e0 54%, #5b8ad0 56%);
`;
const FolderIcon = () => (
  <svg width="24" height="22" viewBox="0 0 24 22" aria-hidden="true">
    <path d="M0 1.5Q0 0 1.5 0H9l2 3H0z" fill="#e2a00f" />
    <path d="M0 3l9 1 2-2h11.5Q24 2 24 3.5V21H0z" fill="#ffcf48" />
    <path d="M4 22v-6q0-1.5 1.5-1.5h13Q20 14.5 20 16v6z" fill="#0f86d8" />
    <path d="M8 18h8" stroke="#0b64a8" strokeWidth="1.4" />
  </svg>
);
const ChevronUp = () => (
  <svg width="12" height="8" viewBox="0 0 12 8" fill="none" stroke="#fff" strokeWidth="1.6" aria-hidden="true"><path d="M1 6.5L6 1.5l5 5" /></svg>
);
const CloudIcon = () => (
  <svg width="18" height="14" viewBox="0 0 18 14" aria-hidden="true">
    <path d="M3 11a3.5 3.5 0 0 1 0-7 5 5 0 0 1 9 0v7z" fill="#a9c0b0" />
    <circle cx="12" cy="9" r="4.8" fill="#d92b35" /><path d="M10 7l4 4M14 7l-4 4" stroke="#fff" strokeWidth="1.2" />
  </svg>
);
const NetworkIcon = () => (
  <svg width="17" height="17" viewBox="0 0 17 17" fill="none" stroke="#fff" strokeWidth="1.2" aria-hidden="true">
    <path d="M10 1.5H1v11h12V8M4 15.5h7M7 12.5v3M11.5 1h4v5h-4zM13.5 6v10" />
  </svg>
);
const SpeakerIcon = () => (
  <svg width="17" height="14" viewBox="0 0 17 14" fill="none" stroke="#fff" strokeWidth="1.2" aria-hidden="true">
    <path d="M1 5h2.5L7 2v10L3.5 9H1zM9 5q1.5 2 0 4M11 3.5q2.5 3.5 0 7" /><path d="M13 1.5q4 5.500 0 11" opacity="0.4" />
  </svg>
);
const BellIcon = () => (
  <svg width="14" height="16" viewBox="0 0 14 16" aria-hidden="true"><path d="M2 11V6a5 5 0 0 1 10 0v5l1.5 2H.5zM5 14h4q-2 2.500-4 0z" fill="#4ff29a" /></svg>
);

const apps: { name: string; icon: React.ReactNode; extra?: React.ReactNode }[] = [
  { name: "Task view", icon: <TaskViewIcon /> },
  { name: "Weather", icon: <WeatherIcon />, extra: <Badge $color="#2d3530" $ink="#fff">12°</Badge> },
  { name: "Teams", icon: <TeamsIcon /> },
  { name: "Minecraft", icon: <BlockFaceIcon /> },
  { name: "Snipping tool", icon: <SnipIcon />, extra: <Running $wide /> },
  { name: "Media player", icon: <PlayerIcon /> },
  { name: "Resource monitor", icon: <MonitorIcon /> },
  { name: "Mail", icon: <MailIcon />, extra: <Badge $color="#2cf58c" $ink="#10331f">99+</Badge> },
  { name: "4K capture", icon: <FourK>4K</FourK> },
  { name: "Game capture", icon: <CaptureIcon /> },
  { name: "Spotify", icon: <Disc $bg="#10301c"><FaSpotify size={23} color="#1ed760" /></Disc>, extra: <Running /> },
  { name: "Chrome", icon: <ChromeIcon />, extra: <><Avatar /><Running /></> },
  { name: "File Explorer", icon: <FolderIcon /> },
  { name: "Steam", icon: <Disc $bg="#fff"><FaSteam size={24} color="#10386e" /></Disc> },
  { name: "OBS Studio", icon: <Disc $bg="#231f20"><SiObsstudio size={23} color="#cfcfcf" /></Disc> },
  { name: "Discord", icon: <Disc $bg="#5865f2"><FaDiscord size={15} color="#fff" /></Disc>, extra: <><RedBadge $color="#ed4b50" $ink="#fff">9+</RedBadge><Running /></> },
  { name: "Photoshop", icon: <AdobeTile $bg="#001e36" $ink="#31a8ff">Ps</AdobeTile> },
  { name: "After Effects", icon: <AdobeTile $bg="#00005b" $ink="#9999ff">Ae</AdobeTile> },
  { name: "Lightroom", icon: <AdobeTile $bg="#001e36" $ink="#31a8ff">Lr</AdobeTile> },
  { name: "Premiere Pro", icon: <AdobeTile $bg="#00005b" $ink="#9999ff">Pr</AdobeTile>, extra: <Running /> },
];

function TaskbarScreen({ main }: { main?: boolean }) {
  return (
    <Screen>
      <Start aria-label="Start"><WindowsLogo /></Start>
      <SearchBox>
        <SearchIcon />
        <SearchInput type="text" placeholder="Search" aria-label="Search" />
        <CakeIcon />
      </SearchBox>
      {apps.map((a) => (
        <AppButton key={a.name} aria-label={a.name}>{a.icon}{a.extra}</AppButton>
      ))}
      <Tray $inset={main ? 14 : 22}>
        {main && (
          <>
            <TrayButton $width={28} aria-label="Show hidden icons"><ChevronUp /></TrayButton>
            <TrayButton $width={36} aria-label="Cloud storage"><CloudIcon /></TrayButton>
            <Language>ENG<br />UK</Language>
            <TrayButton $width={20} aria-label="Network"><NetworkIcon /></TrayButton>
            <TrayButton $width={28} aria-label="Volume"><SpeakerIcon /></TrayButton>
          </>
        )}
        <Clock>22:44<br />20/02/2024</Clock>
        {main && <TrayButton $width={28} aria-label="Notifications"><BellIcon /></TrayButton>}
      </Tray>
    </Screen>
  );
}

export default function App() {
  return (
    <Page>
      <GlobalStyle />
      <WindowStrip><StripClose aria-label="Close">x</StripClose></WindowStrip>
      <PanelHeader>
        <HeaderTools>
          <TabRow>
            <TabClose aria-label="Close sequence">×</TabClose>
            <span>Sequence 10</span>
            <TabMenu aria-label="Panel menu"><span /><span /><span /></TabMenu>
          </TabRow>
          <Timecode aria-label="Playhead position" defaultValue="00;00;00;00" />
          <ToolRow>
            <Tool aria-label="Nest sequences"><NestIcon /></Tool>
            <Tool aria-label="Snap"><MagnetIcon /></Tool>
            <Tool aria-label="Linked selection"><LinkIcon /></Tool>
            <Tool aria-label="Add marker"><MarkerIcon /></Tool>
            <Tool aria-label="Timeline settings"><WrenchIcon /></Tool>
            <Tool aria-label="Captions"><CaptionMark>CC</CaptionMark></Tool>
          </ToolRow>
        </HeaderTools>
        <Ruler />
        <span />
      </PanelHeader>
      <Body>
        <Tracks>
          <Space $grow={201} />
          <TrackList>
            {videoTracks.map((t) => <Track key={t.id} track={t} />)}
            <Divider />
            {audioTracks.map((t) => <Track key={t.id} track={t} />)}
            <TrackRow $height={25}>
              <MixHead>
                <span />
                <LockButton aria-label="Lock mix"><LockIcon /></LockButton>
                <MixName>Mix</MixName>
                <MixLevel aria-label="Mix level" defaultValue="0.0" />
                <KeyButton aria-label="Keyframes"><BowtieIcon /></KeyButton>
              </MixHead>
              <Lane />
            </TrackRow>
          </TrackList>
          <Space $grow={187} />
          <Playhead />
        </Tracks>
        <Rail>
          <RailTrack><Thumb><Ring /><Ring /></Thumb></RailTrack>
          <RailTrack $end><Thumb><Ring /><Ring /></Thumb></RailTrack>
        </Rail>
      </Body>
      <BottomScroll><BottomThumb><Ring /><Ring /></BottomThumb></BottomScroll>
      <Taskbar>
        <TaskbarScreen main />
        <TaskbarScreen />
      </Taskbar>
    </Page>
  );
}
